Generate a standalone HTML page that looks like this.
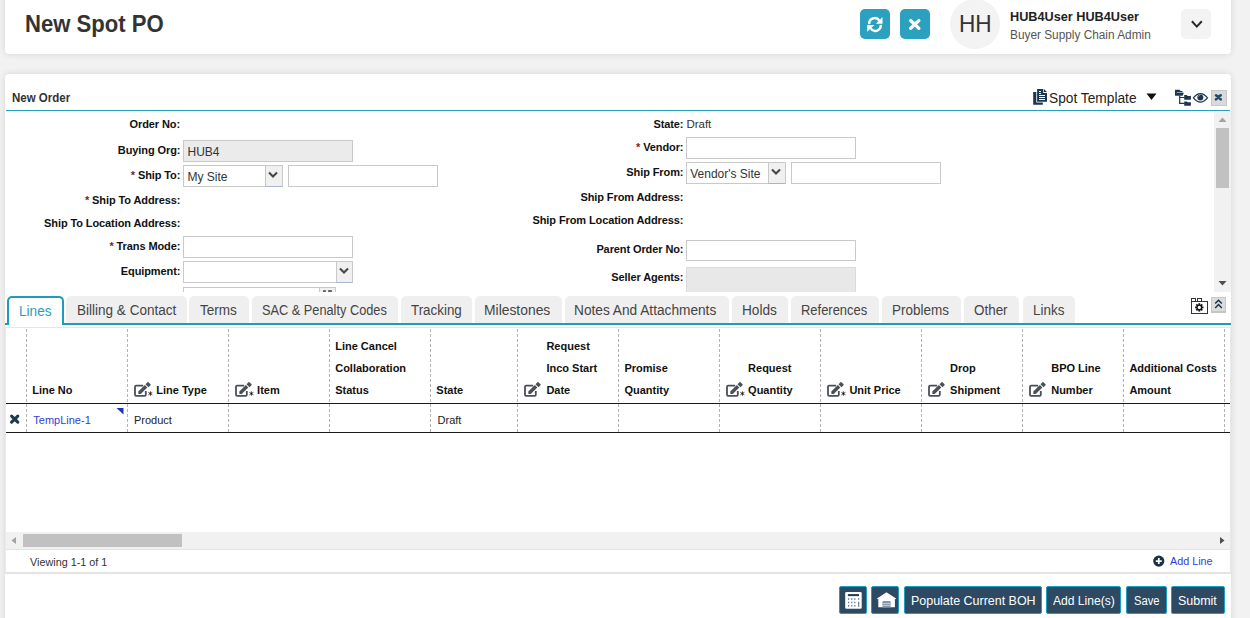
<!DOCTYPE html>
<html><head><meta charset="utf-8"><style>
html,body{margin:0;padding:0;}
body{width:1250px;height:618px;overflow:hidden;background:#f2f2f2;position:relative;font-family:"Liberation Sans", sans-serif;}
.t{position:absolute;white-space:nowrap;line-height:1;}
.r{position:absolute;box-sizing:border-box;}
svg.r{overflow:visible;}
</style></head><body>
<div class="r" style="left:5px;top:-10px;width:1226px;height:63.5px;background:#fff;border-radius:4px;box-shadow:0 0 7px rgba(0,0,0,0.12);"></div>
<div class="t" style="left:25.04px;top:12.53px;font-size:23px;font-weight:700;color:#333;transform:scaleX(0.9613);transform-origin:0 0;">New Spot PO</div>
<div class="r" style="left:860px;top:9px;width:30px;height:30px;background:#2ca0bf;border-radius:5px;"></div>
<div class="r" style="left:900px;top:9px;width:30px;height:30px;background:#2ca0bf;border-radius:5px;"></div>
<svg class="r" style="left:866px;top:16px" width="18" height="17" viewBox="0 0 18 17">
<path d="M3.2 8.2 A5.6 5.6 0 0 1 13.4 4.6" fill="none" stroke="#fff" stroke-width="2.4"/>
<path d="M16.5 0.9 L16.5 7.7 L9.9 7.7 Z" fill="#fff"/>
<path d="M14.8 8.8 A5.6 5.6 0 0 1 4.6 12.4" fill="none" stroke="#fff" stroke-width="2.4"/>
<path d="M1.2 15.7 L1.2 9.1 L8.3 9.1 Z" fill="#fff"/>
</svg>
<svg class="r" style="left:908px;top:18px" width="14" height="13" viewBox="0 0 14 13">
<path d="M2.6 2.5 L10.9 10.4 M10.9 2.5 L2.6 10.4" stroke="#fff" stroke-width="3.2" stroke-linecap="round"/>
</svg>
<div class="r" style="left:950px;top:-1px;width:50px;height:50px;background:#f3f3f3;border-radius:50%;"></div>
<div class="t" style="left:958.56px;top:11.68px;font-size:24px;font-weight:400;color:#333;transform:scaleX(0.9433);transform-origin:0 0;">HH</div>
<div class="t" style="left:1010.00px;top:10.00px;font-size:13px;font-weight:700;color:#222;transform:scaleX(0.9761);transform-origin:0 0;">HUB4User HUB4User</div>
<div class="t" style="left:1009.55px;top:29.22px;font-size:12.5px;font-weight:400;color:#555;transform:scaleX(0.9466);transform-origin:0 0;">Buyer Supply Chain Admin</div>
<div class="r" style="left:1181px;top:9px;width:30px;height:30px;background:#f3f3f3;border-radius:5px;"></div>
<svg class="r" style="left:1190px;top:19px" width="14" height="10" viewBox="0 0 14 10">
<path d="M1.9 2.3 L6.8 7.6 L11.8 2.3" fill="none" stroke="#2a2a2a" stroke-width="2"/>
</svg>
<div class="r" style="left:5px;top:74px;width:1226px;height:626px;background:#fff;border-radius:4px;box-shadow:0 0 7px rgba(0,0,0,0.12);"></div>
<div class="t" style="left:11.50px;top:91.84px;font-size:12px;font-weight:700;color:#333;transform:scaleX(0.9588);transform-origin:0 0;">New Order</div>
<div class="r" style="left:6px;top:110px;width:1224px;height:1px;background:#2a9fbc;"></div>
<svg class="r" style="left:1028px;top:85px" width="24" height="24" viewBox="0 0 24 24">
<path d="M5.2 7 H8.3 V17.4 H14.8 V19.8 H5.2 Z" fill="#1c3650"/>
<path d="M9.1 3.9 H15.2 V7.9 H19 V16.7 H9.1 Z" fill="#1c3650"/>
<path d="M15.9 3.9 L19 7.1 H15.9 Z" fill="#1c3650"/>
<path d="M11 6 H13 V7 H11 Z M11 8 H13 V9 H11 Z M11 10.1 H17 V11.1 H11 Z M11 12.1 H17 V13.1 H11 Z M11 14.1 H17 V15 H11 Z" fill="#fff"/>
</svg>
<div class="t" style="left:1049.00px;top:90.85px;font-size:14px;font-weight:400;color:#222;transform:scaleX(0.9809);transform-origin:0 0;">Spot Template</div>
<svg class="r" style="left:1146px;top:93px" width="11" height="8" viewBox="0 0 11 8">
<path d="M0.5 0.5 H10.5 L5.5 7 Z" fill="#111"/>
</svg>
<svg class="r" style="left:1170px;top:86px" width="60" height="24" viewBox="0 0 60 24">
<path d="M5 3.8 H9.5 L10.5 5 H12.5 V6.3 H7 L5.6 9.8 H5 Z" fill="#1c3650"/>
<path d="M6.4 6.8 H13.9 L12.6 9.8 H5.4 Z" fill="#1c3650"/>
<path d="M9.7 9.8 V17.4 H14.5 M9.7 11.5 H14.5" fill="none" stroke="#1c3650" stroke-width="1.2"/>
<path d="M14.2 9.1 H16.8 L17.5 10 H20.9 V13.7 H14.2 Z" fill="#1c3650"/>
<path d="M14.2 15.4 H16.8 L17.5 16.2 H20.9 V19.7 H14.2 Z" fill="#1c3650"/>
<path d="M23.4 11.9 Q30.4 3.4 37.5 11.9 Q30.4 20.4 23.4 11.9 Z" fill="none" stroke="#1c3650" stroke-width="1.25"/>
<circle cx="30.3" cy="11.6" r="3.0" fill="#1c3650"/>
<path d="M29.6 9.3 L28.6 10.5" stroke="#fff" stroke-width="0.6"/>
</svg>
<div class="r" style="left:1211px;top:90px;width:16px;height:16px;background:#dadada;border:1px solid #c6c6c6;"></div>
<svg class="r" style="left:1170px;top:86px" width="60" height="24" viewBox="0 0 60 24">
<path d="M46.0 9.3 L50.7 13.3 M50.7 9.3 L46.0 13.3" stroke="#234a6a" stroke-width="2.6" stroke-linecap="round"/>
</svg>
<div class="r" style="left:6px;top:111px;width:1225px;height:181px;overflow:hidden;">
<div class="r" style="left:-6px;top:-111px;width:1250px;height:618px;">
<div class="t" style="right:1070px;top:118.69px;font-size:11px;font-weight:700;color:#111;letter-spacing:-0.1px;">Order No:</div>
<div class="t" style="right:1069.7px;top:145.39px;font-size:11px;font-weight:700;color:#111;letter-spacing:-0.1px;">Buying Org:</div>
<div class="r" style="left:183px;top:140px;width:170px;height:22px;background:#ebebeb;border:1px solid #c9c9c9;"></div>
<div class="t" style="left:187.5px;top:145.84px;font-size:12px;font-weight:400;color:#333;">HUB4</div>
<div class="t" style="right:1069.7px;top:170.39px;font-size:11px;font-weight:700;color:#111;letter-spacing:-0.1px;"><span style="color:#7a1f1f;">*</span> Ship To:</div>
<div class="r" style="left:183px;top:165px;width:100px;height:22px;background:#fff;border:1px solid #c9c9c9;"></div><div class="r" style="left:265px;top:165px;width:18px;height:22px;background:#f0f0f0;border:1px solid #c9c9c9;border-bottom-color:#a9b4d0;"></div><svg class="r" style="left:268.4px;top:171.4px" width="10" height="8" viewBox="0 0 10 8"><path d="M1 1.6 L5 5.5 L9 1.6" fill="none" stroke="#454545" stroke-width="2.1"/></svg>
<div class="t" style="left:187.5px;top:170.64px;font-size:12px;font-weight:400;color:#333;">My Site</div>
<div class="r" style="left:288px;top:165px;width:150px;height:22px;background:#fff;border:1px solid #c9c9c9;"></div>
<div class="t" style="right:1069.7px;top:195.39px;font-size:11px;font-weight:700;color:#111;letter-spacing:-0.1px;"><span style="color:#7a1f1f;">*</span> Ship To Address:</div>
<div class="t" style="right:1069.7px;top:218.09px;font-size:11px;font-weight:700;color:#111;letter-spacing:-0.1px;">Ship To Location Address:</div>
<div class="t" style="right:1069.7px;top:241.09px;font-size:11px;font-weight:700;color:#111;letter-spacing:-0.1px;"><span style="color:#7a1f1f;">*</span> Trans Mode:</div>
<div class="r" style="left:183px;top:236px;width:170px;height:22px;background:#fff;border:1px solid #c9c9c9;"></div>
<div class="t" style="right:1069.7px;top:265.69px;font-size:11px;font-weight:700;color:#111;letter-spacing:-0.1px;">Equipment:</div>
<div class="r" style="left:183px;top:261px;width:170px;height:22px;background:#fff;border:1px solid #c9c9c9;"></div><div class="r" style="left:335.5px;top:261px;width:17.5px;height:22px;background:#f0f0f0;border:1px solid #c9c9c9;border-bottom-color:#a9b4d0;"></div><svg class="r" style="left:338.6px;top:267.4px" width="10" height="8" viewBox="0 0 10 8"><path d="M1 1.6 L5 5.5 L9 1.6" fill="none" stroke="#454545" stroke-width="2.1"/></svg>
<div class="r" style="left:183px;top:286.5px;width:153px;height:23.5px;background:#fff;border:1px solid #c9c9c9;"></div>
<div class="r" style="left:318.5px;top:286.5px;width:17.5px;height:23.5px;background:#f0f0f0;border:1px solid #c9c9c9;"></div>
<div class="r" style="left:322.8px;top:290.2px;width:3.3999999999999773px;height:1.8000000000000114px;background:#666;border-radius:1px 1px 0 0;"></div>
<div class="r" style="left:328.2px;top:290.2px;width:3.400000000000034px;height:1.8000000000000114px;background:#666;border-radius:1px 1px 0 0;"></div>
<div class="t" style="right:566.6px;top:118.69px;font-size:11px;font-weight:700;color:#111;letter-spacing:-0.1px;">State:</div>
<div class="t" style="left:686.4px;top:119.27px;font-size:11.5px;font-weight:400;color:#333;">Draft</div>
<div class="t" style="right:566.6px;top:141.69px;font-size:11px;font-weight:700;color:#111;letter-spacing:-0.1px;"><span style="color:#7a1f1f;">*</span> Vendor:</div>
<div class="r" style="left:686px;top:137px;width:170px;height:22px;background:#fff;border:1px solid #c9c9c9;"></div>
<div class="t" style="right:566.6px;top:166.69px;font-size:11px;font-weight:700;color:#111;letter-spacing:-0.1px;">Ship From:</div>
<div class="r" style="left:686px;top:162px;width:100px;height:22px;background:#fff;border:1px solid #c9c9c9;"></div><div class="r" style="left:768px;top:162px;width:18px;height:22px;background:#f0f0f0;border:1px solid #c9c9c9;border-bottom-color:#a9b4d0;"></div><svg class="r" style="left:771.4px;top:168.4px" width="10" height="8" viewBox="0 0 10 8"><path d="M1 1.6 L5 5.5 L9 1.6" fill="none" stroke="#454545" stroke-width="2.1"/></svg>
<div class="t" style="left:690.2px;top:167.84px;font-size:12px;font-weight:400;color:#333;">Vendor's Site</div>
<div class="r" style="left:791px;top:162px;width:150px;height:22px;background:#fff;border:1px solid #c9c9c9;"></div>
<div class="t" style="right:566.6px;top:191.69px;font-size:11px;font-weight:700;color:#111;letter-spacing:-0.1px;">Ship From Address:</div>
<div class="t" style="right:566.6px;top:215.29px;font-size:11px;font-weight:700;color:#111;letter-spacing:-0.1px;">Ship From Location Address:</div>
<div class="t" style="right:566.6px;top:244.49px;font-size:11px;font-weight:700;color:#111;letter-spacing:-0.1px;">Parent Order No:</div>
<div class="r" style="left:686px;top:239.5px;width:170px;height:21.5px;background:#fff;border:1px solid #c9c9c9;"></div>
<div class="t" style="right:566.6px;top:272.49px;font-size:11px;font-weight:700;color:#111;letter-spacing:-0.1px;">Seller Agents:</div>
<div class="r" style="left:686px;top:267px;width:170px;height:33px;background:#e8e8e8;border:1px solid #dadada;"></div>
</div></div>
<div class="r" style="left:1214px;top:111px;width:17px;height:181px;background:#f1f1f1;"></div>
<div class="r" style="left:1216px;top:128px;width:13px;height:60px;background:#c1c1c1;"></div>
<svg class="r" style="left:1214px;top:111px" width="17" height="181" viewBox="0 0 17 181"><path d="M4.5 11 L8.5 6.5 L12.5 11 Z" fill="#a3a3a3"/><path d="M4.5 170 L8.5 174.5 L12.5 170 Z" fill="#505050"/></svg>
<div class="r" style="left:5px;top:323px;width:1226px;height:2px;background:#1f9bbd;"></div>
<div class="r" style="left:7px;top:296px;width:57px;height:29px;background:#fff;border:2px solid #1f9bbd;border-bottom:none;border-radius:5px 5px 0 0;"></div>
<div class="t" style="left:19.03px;top:304.15px;font-size:14px;font-weight:400;color:#2a9fbc;transform:scaleX(0.9702);transform-origin:0 0;">Lines</div>
<div class="r" style="left:66px;top:296px;width:120.5px;height:27px;background:#efefef;border-radius:5px 5px 0 0;"></div>
<div class="t" style="left:76.73px;top:303.35px;font-size:14px;font-weight:400;color:#444;transform:scaleX(0.9663);transform-origin:0 0;">Billing &amp; Contact</div>
<div class="r" style="left:189px;top:296px;width:59.5px;height:27px;background:#efefef;border-radius:5px 5px 0 0;"></div>
<div class="t" style="left:200.20px;top:303.35px;font-size:14px;font-weight:400;color:#444;transform:scaleX(0.9682);transform-origin:0 0;">Terms</div>
<div class="r" style="left:251.5px;top:296px;width:146.0px;height:27px;background:#efefef;border-radius:5px 5px 0 0;"></div>
<div class="t" style="left:261.60px;top:303.35px;font-size:14px;font-weight:400;color:#444;transform:scaleX(0.9112);transform-origin:0 0;">SAC &amp; Penalty Codes</div>
<div class="r" style="left:400.5px;top:296px;width:71.0px;height:27px;background:#efefef;border-radius:5px 5px 0 0;"></div>
<div class="t" style="left:411.00px;top:303.35px;font-size:14px;font-weight:400;color:#444;transform:scaleX(0.9546);transform-origin:0 0;">Tracking</div>
<div class="r" style="left:474.5px;top:296px;width:87.0px;height:27px;background:#efefef;border-radius:5px 5px 0 0;"></div>
<div class="t" style="left:484.01px;top:303.35px;font-size:14px;font-weight:400;color:#444;transform:scaleX(0.9906);transform-origin:0 0;">Milestones</div>
<div class="r" style="left:564.5px;top:296px;width:164.0px;height:27px;background:#efefef;border-radius:5px 5px 0 0;"></div>
<div class="t" style="left:574.22px;top:303.35px;font-size:14px;font-weight:400;color:#444;transform:scaleX(0.9776);transform-origin:0 0;">Notes And Attachments</div>
<div class="r" style="left:731.5px;top:296px;width:56.0px;height:27px;background:#efefef;border-radius:5px 5px 0 0;"></div>
<div class="t" style="left:741.83px;top:303.35px;font-size:14px;font-weight:400;color:#444;transform:scaleX(0.9743);transform-origin:0 0;">Holds</div>
<div class="r" style="left:791px;top:296px;width:87.5px;height:27px;background:#efefef;border-radius:5px 5px 0 0;"></div>
<div class="t" style="left:801.37px;top:303.35px;font-size:14px;font-weight:400;color:#444;transform:scaleX(0.9250);transform-origin:0 0;">References</div>
<div class="r" style="left:881.5px;top:296px;width:79.0px;height:27px;background:#efefef;border-radius:5px 5px 0 0;"></div>
<div class="t" style="left:892.14px;top:303.35px;font-size:14px;font-weight:400;color:#444;transform:scaleX(0.9633);transform-origin:0 0;">Problems</div>
<div class="r" style="left:963.5px;top:296px;width:55.5px;height:27px;background:#efefef;border-radius:5px 5px 0 0;"></div>
<div class="t" style="left:974.40px;top:303.35px;font-size:14px;font-weight:400;color:#444;transform:scaleX(0.9589);transform-origin:0 0;">Other</div>
<div class="r" style="left:1022.5px;top:296px;width:52.0px;height:27px;background:#efefef;border-radius:5px 5px 0 0;"></div>
<div class="t" style="left:1032.64px;top:303.35px;font-size:14px;font-weight:400;color:#444;transform:scaleX(0.9595);transform-origin:0 0;">Links</div>
<svg class="r" style="left:1186px;top:292px" width="44" height="26" viewBox="0 0 44 26">
<rect x="5.5" y="9.5" width="16" height="12" fill="#fff" stroke="#333" stroke-width="1"/>
<rect x="5.5" y="6.5" width="4" height="3" fill="#fff" stroke="#333" stroke-width="1"/>
<rect x="11.5" y="6.5" width="4" height="3" fill="#fff" stroke="#333" stroke-width="1"/>
<g transform="translate(13.3 15.4)" fill="#111">
<circle r="2.9"/>
<path d="M-0.9 -4.2 H0.9 V4.2 H-0.9 Z" /><path d="M-0.9 -4.2 H0.9 V4.2 H-0.9 Z" transform="rotate(45)"/>
<path d="M-0.9 -4.2 H0.9 V4.2 H-0.9 Z" transform="rotate(90)"/><path d="M-0.9 -4.2 H0.9 V4.2 H-0.9 Z" transform="rotate(135)"/>
<circle r="1.6" fill="#fff"/>
</g>
<rect x="25.5" y="5.5" width="14" height="15" fill="#dcdcdc" stroke="#c8c8c8" stroke-width="1"/><rect x="25" y="19" width="15" height="2" fill="#c4c4c4"/>
<path d="M29.2 11.6 L32.5 8.3 L35.8 11.6 M29.2 15.9 L32.5 12.6 L35.8 15.9" fill="none" stroke="#172f47" stroke-width="1.4"/>
</svg>
<div class="r" style="left:5px;top:327px;width:1226px;height:1px;background:#e6e6e6;"></div>
<svg class="r" style="left:0;top:0" width="1250" height="618"><line x1="26.5" y1="329" x2="26.5" y2="432" stroke="#b4b4b4" stroke-width="1" stroke-dasharray="3 2"/><line x1="127.5" y1="329" x2="127.5" y2="432" stroke="#b4b4b4" stroke-width="1" stroke-dasharray="3 2"/><line x1="228.5" y1="329" x2="228.5" y2="432" stroke="#b4b4b4" stroke-width="1" stroke-dasharray="3 2"/><line x1="329.5" y1="329" x2="329.5" y2="432" stroke="#b4b4b4" stroke-width="1" stroke-dasharray="3 2"/><line x1="430.5" y1="329" x2="430.5" y2="432" stroke="#b4b4b4" stroke-width="1" stroke-dasharray="3 2"/><line x1="517.5" y1="329" x2="517.5" y2="432" stroke="#b4b4b4" stroke-width="1" stroke-dasharray="3 2"/><line x1="618.5" y1="329" x2="618.5" y2="432" stroke="#b4b4b4" stroke-width="1" stroke-dasharray="3 2"/><line x1="719.5" y1="329" x2="719.5" y2="432" stroke="#b4b4b4" stroke-width="1" stroke-dasharray="3 2"/><line x1="820.5" y1="329" x2="820.5" y2="432" stroke="#b4b4b4" stroke-width="1" stroke-dasharray="3 2"/><line x1="921.5" y1="329" x2="921.5" y2="432" stroke="#b4b4b4" stroke-width="1" stroke-dasharray="3 2"/><line x1="1022.5" y1="329" x2="1022.5" y2="432" stroke="#b4b4b4" stroke-width="1" stroke-dasharray="3 2"/><line x1="1123.5" y1="329" x2="1123.5" y2="432" stroke="#b4b4b4" stroke-width="1" stroke-dasharray="3 2"/><line x1="1224.5" y1="329" x2="1224.5" y2="432" stroke="#b4b4b4" stroke-width="1" stroke-dasharray="3 2"/></svg>
<div class="r" style="left:6px;top:403px;width:1224px;height:1px;background:#1a1a1a;"></div>
<div class="r" style="left:6px;top:432px;width:1224px;height:1px;background:#1a1a1a;"></div>
<div class="t" style="left:32.2px;top:384.69px;font-size:11px;font-weight:700;color:#111;">Line No</div>
<svg class="r" style="left:129.9px;top:378px" width="26" height="22" viewBox="0 0 26 22">
<path d="M13.2 7.7 H6.1 Q5 7.7 5 8.8 V16.7 Q5 17.8 6.1 17.8 H14.7 Q15.8 17.8 15.8 16.7 V13" fill="none" stroke="#4b5057" stroke-width="1.8"/>
<path d="M8.26 13.56 L14.86 6.96 L17.34 9.44 L10.74 16.04 L8.4 16 Z" fill="#4b5057"/>
<path d="M15.5 6.3 L17.5 4.3 Q18 3.8 18.5 4.3 L20.5 6.3 Q21 6.8 20.5 7.3 L18.5 9.3 Z" fill="#4b5057"/><path d="M20.4 13.3 V17.8 M18.4 14.3 L22.4 16.8 M18.4 16.8 L22.4 14.3" stroke="#333" stroke-width="0.9"/><circle cx="20.4" cy="15.5" r="0.8" fill="#111"/></svg>
<div class="t" style="left:156.3px;top:384.69px;font-size:11px;font-weight:700;color:#111;">Line Type</div>
<svg class="r" style="left:230.9px;top:378px" width="26" height="22" viewBox="0 0 26 22">
<path d="M13.2 7.7 H6.1 Q5 7.7 5 8.8 V16.7 Q5 17.8 6.1 17.8 H14.7 Q15.8 17.8 15.8 16.7 V13" fill="none" stroke="#4b5057" stroke-width="1.8"/>
<path d="M8.26 13.56 L14.86 6.96 L17.34 9.44 L10.74 16.04 L8.4 16 Z" fill="#4b5057"/>
<path d="M15.5 6.3 L17.5 4.3 Q18 3.8 18.5 4.3 L20.5 6.3 Q21 6.8 20.5 7.3 L18.5 9.3 Z" fill="#4b5057"/><path d="M20.4 13.3 V17.8 M18.4 14.3 L22.4 16.8 M18.4 16.8 L22.4 14.3" stroke="#333" stroke-width="0.9"/><circle cx="20.4" cy="15.5" r="0.8" fill="#111"/></svg>
<div class="t" style="left:257.1px;top:384.69px;font-size:11px;font-weight:700;color:#111;">Item</div>
<div class="t" style="left:335.2px;top:384.69px;font-size:11px;font-weight:700;color:#111;">Status</div><div class="t" style="left:335.2px;top:363.09px;font-size:11px;font-weight:700;color:#111;">Collaboration</div><div class="t" style="left:335.2px;top:341.19px;font-size:11px;font-weight:700;color:#111;">Line Cancel</div>
<div class="t" style="left:436.3px;top:384.69px;font-size:11px;font-weight:700;color:#111;">State</div>
<svg class="r" style="left:519.9px;top:378px" width="26" height="22" viewBox="0 0 26 22">
<path d="M13.2 7.7 H6.1 Q5 7.7 5 8.8 V16.7 Q5 17.8 6.1 17.8 H14.7 Q15.8 17.8 15.8 16.7 V13" fill="none" stroke="#4b5057" stroke-width="1.8"/>
<path d="M8.26 13.56 L14.86 6.96 L17.34 9.44 L10.74 16.04 L8.4 16 Z" fill="#4b5057"/>
<path d="M15.5 6.3 L17.5 4.3 Q18 3.8 18.5 4.3 L20.5 6.3 Q21 6.8 20.5 7.3 L18.5 9.3 Z" fill="#4b5057"/></svg>
<div class="t" style="left:546.4px;top:384.69px;font-size:11px;font-weight:700;color:#111;">Date</div><div class="t" style="left:546.4px;top:363.09px;font-size:11px;font-weight:700;color:#111;">Inco Start</div><div class="t" style="left:546.4px;top:341.19px;font-size:11px;font-weight:700;color:#111;">Request</div>
<div class="t" style="left:624.4px;top:384.69px;font-size:11px;font-weight:700;color:#111;">Quantity</div><div class="t" style="left:624.4px;top:363.09px;font-size:11px;font-weight:700;color:#111;">Promise</div>
<svg class="r" style="left:721.9px;top:378px" width="26" height="22" viewBox="0 0 26 22">
<path d="M13.2 7.7 H6.1 Q5 7.7 5 8.8 V16.7 Q5 17.8 6.1 17.8 H14.7 Q15.8 17.8 15.8 16.7 V13" fill="none" stroke="#4b5057" stroke-width="1.8"/>
<path d="M8.26 13.56 L14.86 6.96 L17.34 9.44 L10.74 16.04 L8.4 16 Z" fill="#4b5057"/>
<path d="M15.5 6.3 L17.5 4.3 Q18 3.8 18.5 4.3 L20.5 6.3 Q21 6.8 20.5 7.3 L18.5 9.3 Z" fill="#4b5057"/><path d="M20.4 13.3 V17.8 M18.4 14.3 L22.4 16.8 M18.4 16.8 L22.4 14.3" stroke="#333" stroke-width="0.9"/><circle cx="20.4" cy="15.5" r="0.8" fill="#111"/></svg>
<div class="t" style="left:748.1px;top:384.69px;font-size:11px;font-weight:700;color:#111;">Quantity</div><div class="t" style="left:748.1px;top:363.09px;font-size:11px;font-weight:700;color:#111;">Request</div>
<svg class="r" style="left:822.9px;top:378px" width="26" height="22" viewBox="0 0 26 22">
<path d="M13.2 7.7 H6.1 Q5 7.7 5 8.8 V16.7 Q5 17.8 6.1 17.8 H14.7 Q15.8 17.8 15.8 16.7 V13" fill="none" stroke="#4b5057" stroke-width="1.8"/>
<path d="M8.26 13.56 L14.86 6.96 L17.34 9.44 L10.74 16.04 L8.4 16 Z" fill="#4b5057"/>
<path d="M15.5 6.3 L17.5 4.3 Q18 3.8 18.5 4.3 L20.5 6.3 Q21 6.8 20.5 7.3 L18.5 9.3 Z" fill="#4b5057"/><path d="M20.4 13.3 V17.8 M18.4 14.3 L22.4 16.8 M18.4 16.8 L22.4 14.3" stroke="#333" stroke-width="0.9"/><circle cx="20.4" cy="15.5" r="0.8" fill="#111"/></svg>
<div class="t" style="left:849.4px;top:384.69px;font-size:11px;font-weight:700;color:#111;">Unit Price</div>
<svg class="r" style="left:923.9px;top:378px" width="26" height="22" viewBox="0 0 26 22">
<path d="M13.2 7.7 H6.1 Q5 7.7 5 8.8 V16.7 Q5 17.8 6.1 17.8 H14.7 Q15.8 17.8 15.8 16.7 V13" fill="none" stroke="#4b5057" stroke-width="1.8"/>
<path d="M8.26 13.56 L14.86 6.96 L17.34 9.44 L10.74 16.04 L8.4 16 Z" fill="#4b5057"/>
<path d="M15.5 6.3 L17.5 4.3 Q18 3.8 18.5 4.3 L20.5 6.3 Q21 6.8 20.5 7.3 L18.5 9.3 Z" fill="#4b5057"/></svg>
<div class="t" style="left:950.1px;top:384.69px;font-size:11px;font-weight:700;color:#111;">Shipment</div><div class="t" style="left:950.1px;top:363.09px;font-size:11px;font-weight:700;color:#111;">Drop</div>
<svg class="r" style="left:1024.9px;top:378px" width="26" height="22" viewBox="0 0 26 22">
<path d="M13.2 7.7 H6.1 Q5 7.7 5 8.8 V16.7 Q5 17.8 6.1 17.8 H14.7 Q15.8 17.8 15.8 16.7 V13" fill="none" stroke="#4b5057" stroke-width="1.8"/>
<path d="M8.26 13.56 L14.86 6.96 L17.34 9.44 L10.74 16.04 L8.4 16 Z" fill="#4b5057"/>
<path d="M15.5 6.3 L17.5 4.3 Q18 3.8 18.5 4.3 L20.5 6.3 Q21 6.8 20.5 7.3 L18.5 9.3 Z" fill="#4b5057"/></svg>
<div class="t" style="left:1051.2px;top:384.69px;font-size:11px;font-weight:700;color:#111;">Number</div><div class="t" style="left:1051.2px;top:363.09px;font-size:11px;font-weight:700;color:#111;">BPO Line</div>
<div class="t" style="left:1129.4px;top:384.69px;font-size:11px;font-weight:700;color:#111;">Amount</div><div class="t" style="left:1129.4px;top:363.09px;font-size:11px;font-weight:700;color:#111;">Additional Costs</div>
<svg class="r" style="left:8px;top:413px" width="13" height="12" viewBox="0 0 13 12">
<path d="M3.6 3.2 L9.8 9.2 M9.8 3.2 L3.6 9.2" stroke="#1f3a4f" stroke-width="3.1" stroke-linecap="round"/>
</svg>
<div class="t" style="left:33.3px;top:414.69px;font-size:11px;font-weight:400;color:#2f42d6;">TempLine-1</div>
<svg class="r" style="left:116px;top:408px" width="8" height="7" viewBox="0 0 8 7"><path d="M0.5 0 H7.5 V6.5 Z" fill="#1a35c0"/></svg>
<div class="t" style="left:134px;top:414.99px;font-size:11px;font-weight:400;color:#222;">Product</div>
<div class="t" style="left:437.6px;top:414.99px;font-size:11px;font-weight:400;color:#222;">Draft</div>
<div class="r" style="left:6px;top:532px;width:1224px;height:17px;background:#f1f1f1;"></div>
<div class="r" style="left:23px;top:534px;width:159px;height:13px;background:#c1c1c1;"></div>
<svg class="r" style="left:0;top:530px" width="1250" height="20"><path d="M16 7 L11.5 10.5 L16 14 Z" fill="#a3a3a3"/><path d="M1220 7 L1224.5 10.5 L1220 14 Z" fill="#505050"/></svg>
<div class="r" style="left:6px;top:549px;width:1224px;height:1px;background:#e4e4e4;"></div>
<div class="t" style="left:30.00px;top:556.69px;font-size:11px;font-weight:400;color:#333;transform:scaleX(0.9826);transform-origin:0 0;">Viewing 1-1 of 1</div>
<svg class="r" style="left:1152px;top:554px" width="14" height="14" viewBox="0 0 14 14">
<circle cx="6.8" cy="7.1" r="5.6" fill="#1c3148"/>
<path d="M6.8 4.1 V10.1 M3.8 7.1 H9.8" stroke="#fff" stroke-width="1.8"/>
</svg>
<div class="t" style="left:1170.00px;top:555.69px;font-size:11px;font-weight:400;color:#2f42d6;transform:scaleX(0.9814);transform-origin:0 0;">Add Line</div>
<div class="r" style="left:5px;top:572px;width:1226px;height:2px;background:#e4e4e4;"></div>
<div class="r" style="left:5px;top:327px;width:1px;height:245px;background:#e9e9e9;"></div>
<div class="r" style="left:1230px;top:327px;width:1px;height:245px;background:#e9e9e9;"></div>
<div class="r" style="left:839px;top:586px;width:28px;height:28px;background:#2d4a62;border:1px solid #1ba0c4;border-radius:2px;"></div>
<div class="r" style="left:871px;top:586px;width:28px;height:28px;background:#2d4a62;border:1px solid #1ba0c4;border-radius:2px;"></div>
<div class="r" style="left:903.5px;top:586px;width:138.0px;height:28px;background:#2d4a62;border:1px solid #1ba0c4;border-radius:2px;"></div>
<div class="r" style="left:1046px;top:586px;width:75px;height:28px;background:#2d4a62;border:1px solid #1ba0c4;border-radius:2px;"></div>
<div class="r" style="left:1126px;top:586px;width:41px;height:28px;background:#2d4a62;border:1px solid #1ba0c4;border-radius:2px;"></div>
<div class="r" style="left:1171px;top:586px;width:54px;height:28px;background:#2d4a62;border:1px solid #1ba0c4;border-radius:2px;"></div>
<div class="t" style="left:910.50px;top:594.54px;font-size:12px;font-weight:400;color:#fff;transform:scaleX(1.0378);transform-origin:0 0;">Populate Current BOH</div>
<div class="t" style="left:1053.40px;top:594.54px;font-size:12px;font-weight:400;color:#fff;transform:scaleX(1.0070);transform-origin:0 0;">Add Line(s)</div>
<div class="t" style="left:1133.50px;top:594.54px;font-size:12px;font-weight:400;color:#fff;transform:scaleX(0.9322);transform-origin:0 0;">Save</div>
<div class="t" style="left:1178.30px;top:594.54px;font-size:12px;font-weight:400;color:#fff;transform:scaleX(1.0391);transform-origin:0 0;">Submit</div>
<svg class="r" style="left:845px;top:591px" width="17" height="18" viewBox="0 0 17 18">
<rect x="0.2" y="1" width="16.5" height="16.7" rx="1.3" fill="#fff"/>
<rect x="2.9" y="3.1" width="11.1" height="2.0" fill="#1d3a55"/>
<g fill="#6f849a"><rect x="3.0" y="7.2" width="1.3" height="1.6"/><rect x="3.0" y="10.7" width="1.3" height="1.6"/><rect x="3.0" y="14.0" width="1.3" height="1.6"/><rect x="6.1" y="7.2" width="1.3" height="1.6"/><rect x="6.1" y="10.7" width="1.3" height="1.6"/><rect x="6.1" y="14.0" width="1.3" height="1.6"/><rect x="9.2" y="7.2" width="1.3" height="1.6"/><rect x="9.2" y="10.7" width="1.3" height="1.6"/><rect x="9.2" y="14.0" width="1.3" height="1.6"/><rect x="13.0" y="7.2" width="1.3" height="1.6"/><rect x="13.0" y="10.7" width="1.3" height="5.1"/></g>
</svg>
<svg class="r" style="left:876px;top:592px" width="22" height="17" viewBox="0 0 22 17">
<path d="M0.6 6.7 L10.5 0.2 L20.4 6.7 L18.9 7.3 V15.2 H2.3 V7.3 Z" fill="#fff"/>
<path d="M6.4 15.4 V10.1 Q6.4 9.1 7.4 9.1 H13.7 Q14.7 9.1 14.7 10.1 V15.4 Z" fill="#8595a5"/>
<path d="M6.4 11.6 H14.7 M6.4 13.6 H14.7" stroke="#dfe4e8" stroke-width="0.7"/>
</svg>
</body></html>
